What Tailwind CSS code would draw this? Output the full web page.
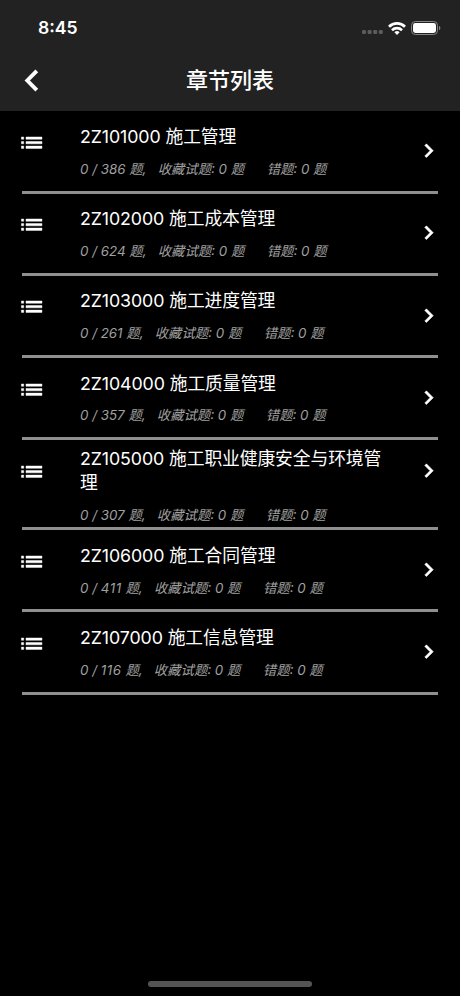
<!DOCTYPE html>
<html lang="zh-CN">
<head>
  <meta charset="UTF-8">
  <meta name="viewport" content="width=device-width, initial-scale=1.0">
  <title>章节列表</title>
  <script src="https://cdn.jsdelivr.net/npm/@tailwindcss/browser@4"></script>
</head>
<body class="bg-black text-white font-['Inter','Noto_Sans_CJK_SC',sans-serif]">
  <div class="relative h-[996px] w-[460px] overflow-hidden bg-black">

    <!-- Status bar + title bar -->
    <header class="h-[111px] bg-[#222222]">
      <div class="flex h-[56px] items-center justify-between pl-[38px] pr-[19px]">
        <span class="text-[17.6px] leading-none font-semibold">8:45</span>
        <div class="flex items-center">
          <svg class="mt-[8px] mr-[5px]" width="21" height="4" viewBox="0 0 21 4" fill="#5c5c5c">
            <rect x="0" y="0" width="4" height="4" rx="1.2"/>
            <rect x="5.6" y="0" width="4" height="4" rx="1.2"/>
            <rect x="11.2" y="0" width="4" height="4" rx="1.2"/>
            <rect x="16.8" y="0" width="4" height="4" rx="1.2"/>
          </svg>
          <svg class="mr-[5px]" width="18" height="13" viewBox="0 0 18 13" fill="none" stroke="#fff" stroke-width="2.7">
            <path d="M1 4.7a11.4 11.4 0 0 1 16 0"/>
            <path d="M4 8.2a7.2 7.2 0 0 1 10 0"/>
            <path d="M9 13l-2.6-2.7a3.8 3.8 0 0 1 5.2 0z" fill="#fff" stroke="none"/>
          </svg>
          <svg width="30" height="14" viewBox="0 0 30 14">
            <rect x=".5" y=".5" width="26" height="13" rx="3.8" fill="none" stroke="#858585"/>
            <rect x="2" y="2" width="23" height="10" rx="2.4" fill="#fff"/>
            <path d="M28 4.8c1.9.8 1.9 3.6 0 4.4z" fill="#858585"/>
          </svg>
        </div>
      </div>
      <div class="grid h-[49px] grid-cols-[60px_1fr_60px] items-center">
        <svg class="ml-[24px]" width="15" height="23" viewBox="0 0 15 23" fill="none" stroke="#fff" stroke-width="3.9">
          <path d="M12.8 1.9L3.3 11.5l9.5 9.6"/>
        </svg>
        <h1 class="pb-[1.5px] text-center text-[22px] leading-none font-medium">章节列表</h1>
      </div>
    </header>

    <ul id="chapters" class="pt-[0.5px]"></ul>

    <!-- Home indicator -->
    <div class="absolute bottom-[9px] left-[148px] h-[6px] w-[164px] rounded-full bg-[#545454]"></div>
  </div>

  <template id="row">
    <li class="mx-[22px] flex h-[82.2px] border-b-[3px] border-[#8f8f8f]">
      <svg class="-ml-[4px] mt-[17.5px] h-[27.4px] w-[27.4px] shrink-0" viewBox="0 0 24 24" fill="#fff" stroke="#fff" stroke-width=".4">
        <path d="M3 13h2v-2H3v2zm0 4h2v-2H3v2zm0-8h2V7H3v2zm4 4h14v-2H7v2zm0 4h14v-2H7v2zM7 7v2h14V7H7z"/>
      </svg>
      <div class="ml-[34.6px] w-[314px] shrink-0 pt-[13.5px]">
        <h2 class="text-[17.8px] leading-[24px] tracking-[-0.1px]"></h2>
        <p class="mt-[9.8px] text-[13.35px] leading-[20px] whitespace-pre text-[#a0a0a0] italic">0 / <span></span> 题,   收藏试题: 0 题      错题: 0 题</p>
      </div>
      <svg class="ml-[20.8px] mt-[25.7px] h-[27.4px] w-[27.4px] shrink-0" viewBox="0 0 24 24" fill="#fff" stroke="#fff" stroke-width=".5">
        <path d="M10 6L8.59 7.41 13.17 12l-4.58 4.59L10 18l6-6z"/>
      </svg>
    </li>
  </template>

  <script>
    const chapters = [
      ["2Z101000 施工管理", 386],
      ["2Z102000 施工成本管理", 624],
      ["2Z103000 施工进度管理", 261],
      ["2Z104000 施工质量管理", 357],
      ["2Z105000 施工职业健康安全与环境管理", 307],
      ["2Z106000 施工合同管理", 411],
      ["2Z107000 施工信息管理", 116],
    ];
    const list = document.getElementById("chapters");
    chapters.forEach(([title, total]) => {
      const row = document.getElementById("row").content.cloneNode(true);
      row.querySelector("h2").textContent = title;
      row.querySelector("span").textContent = total;
      // keep adjacent 1s from sitting too close
      if (String(total).includes("11")) row.querySelector("span").classList.add("tracking-[0.6px]");
      // two-line titles use a taller row with tighter padding
      if (title.length > 18) {
        row.querySelector("li").classList.replace("h-[82.2px]", "h-[90px]");
        row.querySelector("div").classList.replace("pt-[13.5px]", "pt-[6.4px]");
        row.querySelector("p").classList.replace("mt-[9.8px]", "mt-[10px]");
        row.querySelector("svg:last-child").classList.replace("mt-[25.7px]", "mt-[17px]");
      }
      list.appendChild(row);
    });
  </script>
</body>
</html>
